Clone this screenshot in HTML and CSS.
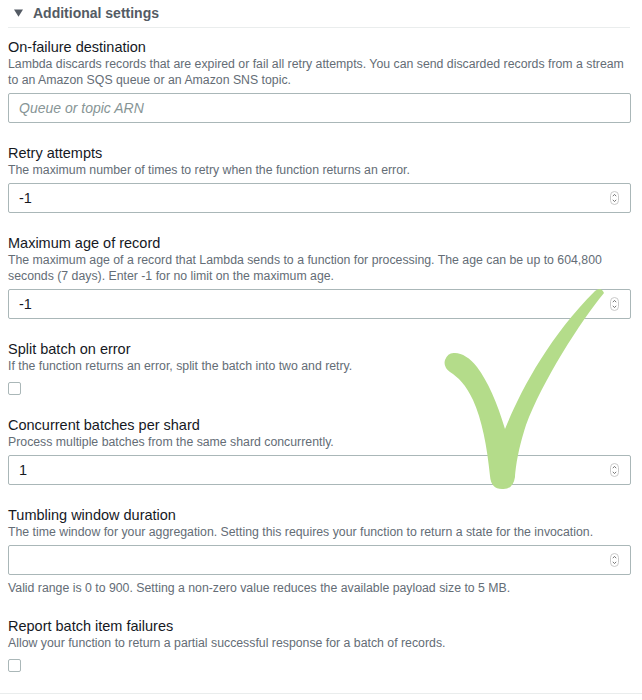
FILE: index.html
```html
<!DOCTYPE html>
<html lang="en">
<head>
<meta charset="utf-8">
<title>Additional settings</title>
<link rel="stylesheet" href="styles.css">
</head>
<body>
<div class="page">
  <section class="panel">
    <div class="panel-header">
      <svg class="caret" width="9" height="8" viewBox="0 0 9 8" aria-hidden="true"><path d="M0 0.5 H9 L4.5 7.8 Z" fill="#545b64"/></svg>
      <span class="panel-title">Additional settings</span>
    </div>
    <div class="fields">
      <div class="field">
        <div class="label">On-failure destination</div>
        <div class="desc">Lambda discards records that are expired or fail all retry attempts. You can send discarded records from a stream to an Amazon SQS queue or an Amazon SNS topic.</div>
        <div class="input"><span class="placeholder">Queue or topic ARN</span></div>
      </div>
      <div class="field">
        <div class="label">Retry attempts</div>
        <div class="desc">The maximum number of times to retry when the function returns an error.</div>
        <div class="input"><span class="value">-1</span>
          <svg class="spin" width="9" height="14" viewBox="0 0 9 14"><rect x="0.5" y="0.5" width="8" height="13" rx="4" fill="#fff" stroke="#c9c9c9"/><path d="M2.8 5.2 L4.5 3.4 L6.2 5.2" fill="none" stroke="#666" stroke-width="0.9"/><path d="M2.8 8.8 L4.5 10.6 L6.2 8.8" fill="none" stroke="#666" stroke-width="0.9"/></svg>
        </div>
      </div>
      <div class="field">
        <div class="label">Maximum age of record</div>
        <div class="desc">The maximum age of a record that Lambda sends to a function for processing. The age can be up to 604,800 seconds (7 days). Enter -1 for no limit on the maximum age.</div>
        <div class="input"><span class="value">-1</span>
          <svg class="spin" width="9" height="14" viewBox="0 0 9 14"><rect x="0.5" y="0.5" width="8" height="13" rx="4" fill="#fff" stroke="#c9c9c9"/><path d="M2.8 5.2 L4.5 3.4 L6.2 5.2" fill="none" stroke="#666" stroke-width="0.9"/><path d="M2.8 8.8 L4.5 10.6 L6.2 8.8" fill="none" stroke="#666" stroke-width="0.9"/></svg>
        </div>
      </div>
      <div class="field">
        <div class="label">Split batch on error</div>
        <div class="desc">If the function returns an error, split the batch into two and retry.</div>
        <span class="checkbox"></span>
      </div>
      <div class="field">
        <div class="label">Concurrent batches per shard</div>
        <div class="desc">Process multiple batches from the same shard concurrently.</div>
        <div class="input"><span class="value">1</span>
          <svg class="spin" width="9" height="14" viewBox="0 0 9 14"><rect x="0.5" y="0.5" width="8" height="13" rx="4" fill="#fff" stroke="#c9c9c9"/><path d="M2.8 5.2 L4.5 3.4 L6.2 5.2" fill="none" stroke="#666" stroke-width="0.9"/><path d="M2.8 8.8 L4.5 10.6 L6.2 8.8" fill="none" stroke="#666" stroke-width="0.9"/></svg>
        </div>
      </div>
      <div class="field">
        <div class="label">Tumbling window duration</div>
        <div class="desc">The time window for your aggregation. Setting this requires your function to return a state for the invocation.</div>
        <div class="input"><span class="value"></span>
          <svg class="spin" width="9" height="14" viewBox="0 0 9 14"><rect x="0.5" y="0.5" width="8" height="13" rx="4" fill="#fff" stroke="#c9c9c9"/><path d="M2.8 5.2 L4.5 3.4 L6.2 5.2" fill="none" stroke="#666" stroke-width="0.9"/><path d="M2.8 8.8 L4.5 10.6 L6.2 8.8" fill="none" stroke="#666" stroke-width="0.9"/></svg>
        </div>
        <div class="hint">Valid range is 0 to 900. Setting a non-zero value reduces the available payload size to 5 MB.</div>
      </div>
      <div class="field">
        <div class="label">Report batch item failures</div>
        <div class="desc">Allow your function to return a partial successful response for a batch of records.</div>
        <span class="checkbox"></span>
      </div>
    </div>
  </section>
  <svg class="tick" width="642" height="700" viewBox="0 0 642 700" aria-hidden="true">
    <path d="M455 353 C462 353 470 358 477 367 C488 382 497 402 505 429 C520 392 548 338 595 291 Q601 286 604 293 C580 322 542 382 526 425 C518 450 516 465 515 477 Q513 490 502 489 Q491 489 490 476 C487 446 482 420 473 400 C466 385 458 377 450 372 Q443 367 445 360 Q448 352 455 353 Z" fill="#b4dc8a"/>
  </svg>
</div>
</body>
</html>
```
FILE: styles.css
```css
html, body {
  margin: 0;
  padding: 0;
  background: #ffffff;
}

.page {
  position: relative;
  width: 642px;
  height: 700px;
  overflow: hidden;
  font-family: "Liberation Sans", Arial, sans-serif;
  color: #16191f;
}

.panel {
  border-bottom: 1px solid #eaeded;
  padding-bottom: 21px;
}

.panel-header {
  margin-left: 8px;
  width: 622px;
  display: flex;
  align-items: center;
  padding: 4px 0 5px 0;
  border-bottom: 1px solid #eaeded;
  height: 18px;
}

.caret {
  display: block;
  margin-left: 6px;
  margin-right: 10px;
}

.panel-title {
  font-size: 14px;
  font-weight: bold;
  color: #545b64;
  line-height: 18px;
}

.fields {
  display: flex;
  flex-direction: column;
  gap: 21px;
  padding: 10px 0 0 8px;
  width: 623px;
}

.field {
  display: flex;
  flex-direction: column;
}

.label {
  font-size: 14.5px;
  line-height: 18px;
  color: #16191f;
}

.desc, .hint {
  font-size: 12.3px;
  line-height: 16px;
  color: #646d76;
}

.hint {
  margin-top: 5px;
}

.input {
  margin-top: 5px;
  height: 28px;
  border: 1px solid #aab7b8;
  border-radius: 2px;
  display: flex;
  align-items: center;
  justify-content: space-between;
  padding: 0 11px 0 10px;
}

.value {
  font-size: 14.5px;
  color: #16191f;
}

.placeholder {
  font-size: 14px;
  font-style: italic;
  color: #879596;
}

.spin {
  display: block;
}

.checkbox {
  display: block;
  margin-top: 8px;
  width: 11px;
  height: 11px;
  border: 1px solid #aab7b8;
  border-radius: 2px;
}

.tick {
  position: absolute;
  top: 0;
  left: 0;
  pointer-events: none;
}
```
